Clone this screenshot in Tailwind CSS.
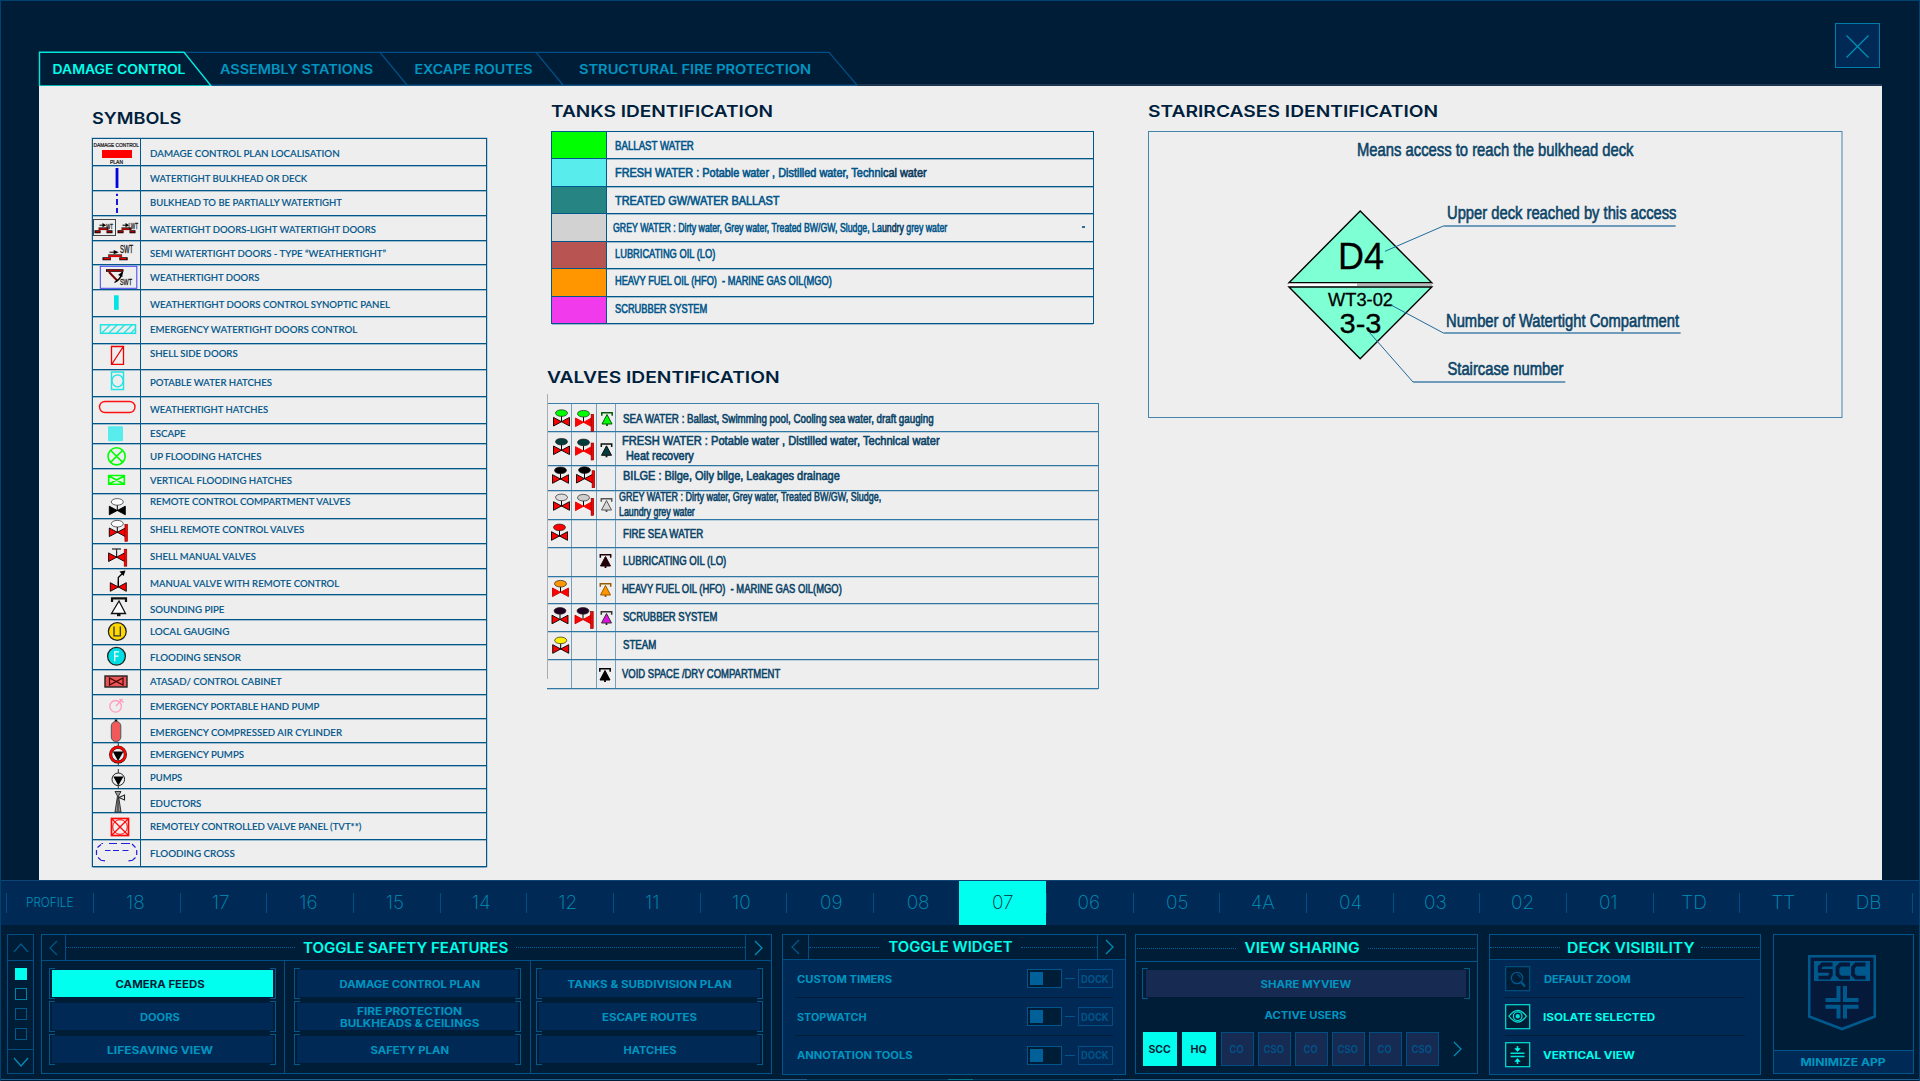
<!DOCTYPE html>
<html lang="en">
<head>
<meta charset="utf-8">
<title>Damage Control</title>
<script src="https://cdn.jsdelivr.net/npm/@tailwindcss/browser@4"></script>
</head>
<body class="bg-[#001d38] overflow-hidden">
<div class="relative w-[1920px] h-[1081px] overflow-hidden bg-[#001d38] border-t border-x border-[#00426f] flex flex-col font-['Inter','Liberation_Sans',sans-serif]">

  <!-- plan viewer -->
  <section class="h-[879px] pl-[38px] flex flex-col shrink-0">
    <div class="flex h-[85px] items-end">
      <svg class="block w-[1844px] h-[35px] overflow-visible" viewBox="39 51.5 1844 35" font-family="Inter, sans-serif" font-weight="600" font-size="12.5" fill="#0095c0">
        <path d="M856 85.5H1882" stroke="#3a4f68" fill="none"/>
        <path d="M184 52.8H829L857 85.7H211M380 52.8L407 85.5M536 52.8L563 85.5" stroke="#004f86" stroke-width="1.3" fill="none"/>
        <path d="M211 86.5H857" stroke="#2d6d9c" fill="none"/>
        <path d="M39.5 86.4V52.8H184L211 86.4Z" stroke="#00e8de" stroke-width="1.4" fill="#001d38"/>
        <text x="52.5" y="74.5" textLength="133" lengthAdjust="spacingAndGlyphs" fill="#00ffea">DAMAGE CONTROL</text>
        <text x="220" y="74.5" textLength="153" lengthAdjust="spacingAndGlyphs">ASSEMBLY STATIONS</text>
        <text x="414.5" y="74.5" textLength="118" lengthAdjust="spacingAndGlyphs">EXCAPE ROUTES</text>
        <text x="579" y="74.5" textLength="232" lengthAdjust="spacingAndGlyphs">STRUCTURAL FIRE PROTECTION</text>
      </svg>
    </div>
    <main class="w-[1843px] h-[794px] bg-[#eeeeee] flex items-start">
      <div class="ml-[53px] pt-[22px] w-[395px]">
        <h2 class="h-[29px] leading-[20px] text-[16.5px] font-semibold text-[#001f3d]"><span data-w="89" class="inline-block whitespace-nowrap origin-left">SYMBOLS</span></h2>
        <div id="symbols" class="border border-[#00588a] border-b-0 mt-px shadow-[0_0_0_0.5px_#00588a66]"></div>
      </div>
      <div class="ml-[60px] w-[552px]">
        <div class="pt-[15px] pl-[4px]">
          <h2 class="h-[30px] leading-[20px] text-[16.5px] font-semibold text-[#001f3d]"><span data-w="222" class="inline-block whitespace-nowrap origin-left">TANKS IDENTIFICATION</span></h2>
          <div id="tanks" class="w-[543px] border border-[#00588a] border-b-0"></div>
        </div>
        <div class="pt-[43px]">
          <h2 class="h-[37px] leading-[20px] text-[16.5px] font-semibold text-[#001f3d]"><span data-w="232" class="inline-block whitespace-nowrap origin-left">VALVES IDENTIFICATION</span></h2>
          <div class="relative">
            <div id="valves" class="w-[552px] border-t border-r border-[#3a7ea9] mt-[-1px]"></div>
            <div class="absolute left-0 top-[-9px] w-px h-[285px] bg-[#a9adb1]"></div>
          </div>
        </div>
      </div>
      <div class="ml-[49px] pt-[15px]">
        <h2 class="h-[30px] leading-[20px] text-[16.5px] font-semibold text-[#001f3d]"><span data-w="290" class="inline-block whitespace-nowrap origin-left">STARIRCASES IDENTIFICATION</span></h2>
        <svg class="block w-[695px] h-[287px]" viewBox="1148 131 695 287" font-family="Liberation Sans, sans-serif" font-size="18.5">
          <rect x="1148.5" y="131.5" width="693.5" height="286" fill="none" stroke="#4585ad"/>
          <path d="M1289 282.7L1360.2 211L1431.8 282.7Z" fill="#7fffd4" stroke="#000" stroke-width="1.4"/>
          <rect x="1289" y="283.5" width="68" height="2.5" fill="#fff"/><rect x="1357" y="283.5" width="75" height="2.5" fill="#b9b9b9"/>
          <path d="M1289 287L1360.2 358.8L1431.8 287Z" fill="#7fffd4" stroke="#000" stroke-width="1.4"/>
          <g fill="#000" stroke="#000" stroke-width=".3">
            <text x="1338" y="268.8" font-size="36.5" textLength="46" lengthAdjust="spacingAndGlyphs">D4</text>
            <text x="1328" y="306" font-size="18" textLength="65" lengthAdjust="spacingAndGlyphs">WT3-02</text>
            <text x="1339.5" y="332.5" font-size="28" textLength="42" lengthAdjust="spacingAndGlyphs">3-3</text>
          </g>
          <path d="M1385 251.3L1443.4 226M1391 305L1443.4 333M1369.3 332.3L1413 382" stroke="#1f6a9c" fill="none"/>
          <path d="M1443.4 226H1675.6M1443.4 333H1680.6M1413 382H1565.3" stroke="#6e9cba" stroke-width="1.8" fill="none"/>
          <g fill="#0a4468" stroke="#0a4468" stroke-width=".6">
            <text x="1357" y="155.8" textLength="276.5" lengthAdjust="spacingAndGlyphs">Means access to reach the bulkhead deck</text>
            <text x="1447" y="219.3" font-size="17.5" textLength="229.5" lengthAdjust="spacingAndGlyphs">Upper deck reached by this access</text>
            <text x="1446" y="326.5" font-size="17.5" textLength="233" lengthAdjust="spacingAndGlyphs">Number of Watertight Compartment</text>
            <text x="1447.4" y="375.3" font-size="17.5" textLength="116" lengthAdjust="spacingAndGlyphs">Staircase number</text>
          </g>
        </svg>
      </div>
    </main>
  </section>
  <button class="absolute left-[1834px] top-[22px] w-[45px] h-[45px] border-[1.5px] border-[#007ba8] bg-[#002a55]">
    <svg class="block w-[42px] h-[42px]" viewBox="0 0 42 42"><path d="M10.5 10.5L32.5 32.5M32.5 10.5L10.5 32.5" stroke="#0090b8" stroke-width="1.2"/></svg>
  </button>

  <!-- deck selector -->
  <nav id="decks" class="h-[45px] shrink-0 pl-[5.4px] bg-[#002a55] border-t border-[#0d4675] flex items-center"></nav>

  <!-- control deck -->
  <footer class="relative h-[155px] shrink-0 pl-[6px] pt-[9px] flex items-start text-[10px] leading-[12px] font-bold text-[#0095c0]">
    <div class="w-[27px] h-[140px] border border-[#004e84] flex flex-col items-center">
      <div class="h-[26px] w-full border-b border-[#004e84] flex items-center justify-center"><svg class="w-[16px] h-[10px]" viewBox="0 0 16 10"><path d="M1 9L8 1L15 9" fill="none" stroke="#00598d" stroke-width="1.2"/></svg></div>
      <div class="h-[88px] pt-[7px] w-full flex flex-col items-center gap-[8px]">
        <i class="w-[12px] h-[12px] bg-[#00ffee]"></i><i class="w-[12px] h-[12px] border-[1.5px] border-[#0083a8]"></i><i class="w-[12px] h-[12px] border-[1.5px] border-[#00598d]"></i><i class="w-[12px] h-[12px] border-[1.5px] border-[#00598d]"></i>
      </div>
      <div class="flex-1 w-full border-t border-[#004e84] flex items-center justify-center"><svg class="w-[16px] h-[10px]" viewBox="0 0 16 10"><path d="M1 1L8 9L15 1" fill="none" stroke="#0090b8" stroke-width="1.2"/></svg></div>
    </div>

    <div class="ml-[6.500px] w-[731px] h-[140px] border border-[#00558a] flex flex-col">
      <div class="h-[26px] border-b-[1.5px] border-[#004e84] flex items-stretch">
        <div class="w-[25px] border-r border-[#004e84] flex items-center justify-center"><svg class="w-[9px] h-[16px]" viewBox="0 0 9 16"><path d="M8 1L1 8L8 15" fill="none" stroke="#00598d" stroke-width="1.2"/></svg></div>
        <div class="flex-1 flex items-center justify-center"><i class="w-[229px] border-t border-dotted border-[#00609a]"></i><div class="w-[221px] text-center text-[14px] leading-[16px] text-[#00ffea] font-semibold"><span data-w="205" class="inline-block whitespace-nowrap origin-center">TOGGLE SAFETY FEATURES</span></div><i class="w-[229px] border-t border-dotted border-[#00609a]"></i></div>
        <div class="w-[26px] border-l border-[#004e84] flex items-center justify-center"><svg class="w-[9px] h-[16px]" viewBox="0 0 9 16"><path d="M1 1L8 8L1 15" fill="none" stroke="#0090b8" stroke-width="1.2"/></svg></div>
      </div>
      <div id="features" class="flex-1 grid grid-cols-[242px_246px_1fr]"></div>
    </div>

    <div class="ml-[10px] w-[344px] h-[141px] border border-[#00558a] bg-[#002a55] flex flex-col">
      <div class="h-[27px] border-b-[1.5px] border-[#004e84] bg-[#001d38] flex items-stretch">
        <div class="w-[27px] border-r border-[#004e84] flex items-center justify-center"><svg class="w-[9px] h-[16px]" viewBox="0 0 9 16"><path d="M8 1L1 8L8 15" fill="none" stroke="#00598d" stroke-width="1.2"/></svg></div>
        <div class="flex-1 flex items-center justify-center"><i class="w-[70px] border-t border-dotted border-[#00609a]"></i><div class="w-[142px] text-center text-[14px] leading-[16px] text-[#00ffea] font-semibold"><span data-w="124" class="inline-block whitespace-nowrap origin-center">TOGGLE WIDGET</span></div><i class="w-[76px] border-t border-dotted border-[#00609a]"></i></div>
        <div class="w-[28px] pr-[3px] border-l border-[#004e84] flex items-center justify-center"><svg class="w-[9px] h-[16px]" viewBox="0 0 9 16"><path d="M1 1L8 8L1 15" fill="none" stroke="#0090b8" stroke-width="1.2"/></svg></div>
      </div>
      <div id="widgets" class="px-[12px]"></div>
    </div>

    <div class="ml-[9px] w-[343px] h-[140px] border border-[#00558a] flex flex-col">
      <div class="h-[27px] border-b-[1.5px] border-[#00558a] flex items-center justify-center"><i class="w-[99px] border-t border-dotted border-[#00609a]"></i><div class="w-[132px] text-center text-[14px] leading-[16px] text-[#00ffea] font-semibold"><span data-w="115" class="inline-block whitespace-nowrap origin-center">VIEW SHARING</span></div><i class="w-[107px] border-t border-dotted border-[#00609a]"></i></div>
      <div class="pl-[6px] pt-[6px]">
        <div class="relative w-[328px] h-[31px] border-x border-[#00598d] px-[3px] py-[2px]">
          <i class="absolute left-0 top-0 w-[5px] h-full border-y border-[#00598d]"></i><i class="absolute right-0 top-0 w-[5px] h-full border-y border-[#00598d]"></i>
          <div class="h-full bg-[#162a52] flex items-center justify-center"><span data-w="91" class="inline-block whitespace-nowrap origin-center">SHARE MYVIEW</span></div>
        </div>
      </div>
      <div class="pt-[10px] pr-px text-center"><span data-w="82" class="inline-block whitespace-nowrap origin-center">ACTIVE USERS</span></div>
      <div class="mt-[11px] pl-[7px] flex items-center">
        <div class="w-[34px] h-[34px] bg-[#00ffee] text-[#001d38] flex items-center justify-center"><span data-w="22" class="inline-block origin-center">SCC</span></div>
        <div class="ml-[5px] w-[34px] h-[34px] bg-[#00ffee] text-[#001d38] flex items-center justify-center"><span data-w="16" class="inline-block origin-center">HQ</span></div>
        <div id="users" class="ml-[5px] flex gap-[4px]"></div>
        <svg class="ml-[14px] w-[9px] h-[16px]" viewBox="0 0 9 16"><path d="M1 1L8 8L1 15" fill="none" stroke="#0090b8" stroke-width="1.2"/></svg>
      </div>
    </div>

    <div class="ml-[11px] w-[272px] h-[141px] border border-[#00558a] bg-[#002a55] flex flex-col">
      <div class="h-[27px] border-b-[1.5px] border-[#004e84] bg-[#001d38] flex items-center justify-center pt-px"><i class="w-[70px] border-t border-dotted border-[#00609a]"></i><div class="w-[141px] text-center text-[14px] leading-[16px] text-[#00ffea] font-semibold"><span data-w="128" class="inline-block whitespace-nowrap origin-center">DECK VISIBILITY</span></div><i class="w-[58px] border-t border-dotted border-[#00609a]"></i></div>
      <div class="px-[15px]">
        <div class="flex items-center h-[38px] border-b border-[#001d38]">
          <svg class="w-[26px] h-[26px]" viewBox="0 0 26 26" fill="none" stroke="#00598d"><rect x=".7" y=".7" width="24" height="24" fill="#001d38"/><circle cx="12" cy="12" r="5.7" stroke-width="1.2"/><path d="M12 8.6a3.5 3.5 0 0 1 3.3 3.3"/><path d="M16.2 16.2L20 20.5" stroke-width="2.2"/></svg>
          <span data-w="87" class="ml-[13px] inline-block whitespace-nowrap origin-left">DEFAULT ZOOM</span>
        </div>
        <div class="flex items-center h-[38px] border-b border-[#001d38] text-[#00ffea]">
          <svg class="w-[26px] h-[26px]" viewBox="0 0 26 26" fill="none" stroke="#00e0d4" stroke-width="1.2"><rect x=".7" y=".7" width="24" height="24" fill="#001d38"/><path d="M4 12.2Q12.7 .5 21.4 12.2Q12.7 23.9 4 12.2Z"/><circle cx="12.7" cy="12.2" r="4.3"/><circle cx="12.7" cy="12.2" r="1.5" fill="#00e0d4" stroke-width="1.4"/></svg>
          <span data-w="112" class="ml-[12px] inline-block whitespace-nowrap origin-left">ISOLATE SELECTED</span>
        </div>
        <div class="flex items-center h-[38px] text-[#00ffea]">
          <svg class="w-[26px] h-[26px]" viewBox="0 0 26 26" stroke="#00e0d4" stroke-width="1.2" fill="none"><rect x=".7" y=".7" width="24" height="24" fill="#001d38"/><path d="M5.5 11.3H19.5M5.5 14.5H19.5" stroke-width="1.6"/><path d="M12.5 4V7M12.5 22V19" stroke-width="1.6"/><path d="M9.3 6.3H15.7L12.5 9.7ZM9.3 19.7H15.7L12.5 16.3Z" fill="#00ffee" stroke="none"/></svg>
          <span data-w="92" class="ml-[12px] inline-block whitespace-nowrap origin-left">VERTICAL VIEW</span>
        </div>
      </div>
    </div>

    <div class="ml-[12px] w-[141px] h-[140px] border border-[#00558a] flex flex-col">
      <div class="flex-1 flex justify-center">
        <svg class="mt-[20px] mr-[3px] w-[68px] h-[77px]" viewBox="0 0 68 77"><path d="M1.2 1.2H66.8V61.5L34 74L1.2 61.5Z" fill="#051a3a" stroke="#00598d" stroke-width="2.6"/><rect x="6" y="6" width="56" height="20" fill="#00598d"/><g fill="none" stroke="#051a3a" stroke-width="3.8"><path d="M24.5 9.5H14.5L11.8 12V15.8H22.8V20L21 22.6H10.5"/><path d="M42 9.5H32.5L29.5 12.5V19.6L32.5 22.6H42"/><path d="M57.5 9.5H48L45 12.5V19.6L48 22.6H57.5"/></g><path d="M30.5 31V45H17.5M37 31V45H50.5M30.5 63.5V51.8H17.5M37 63.5V51.8H50.5" fill="none" stroke="#00598d" stroke-width="4"/></svg>
      </div>
      <div class="h-[23px] border-t border-[#00558a] bg-[#002a55] flex items-center justify-center"><span data-w="85" class="inline-block whitespace-nowrap origin-center">MINIMIZE APP</span></div>
    </div>

    <div class="absolute left-0 bottom-0 w-full h-px flex bg-[#1f5f8f]"><i class="ml-[806px] w-[141px] bg-[#003a5f]"></i><i class="w-[25px] bg-[#007a8c]"></i><i class="w-[140px] bg-[#003a5f]"></i></div>
  </footer>
</div>

<script>
const $ = id => document.getElementById(id);

// Gate valve centred on x,y; optional operator bulb and hull flange.
const valve = (x, y, body, bulb, flange, line = '#000') =>
  `<path d="M${x} ${y}V${y - 6}" stroke="#000"/>` +
  (bulb ? `<ellipse cx="${x}" cy="${y - 8.6}" rx="6" ry="3.3" fill="${bulb}" stroke="#222" stroke-width=".7"/>` : '') +
  `<path d="M${x - 8} ${y - 4.3}V${y + 4.3}L${x + 8} ${y - 4.3}V${y + 4.3}Z" fill="${body}" stroke="${line}" stroke-width=".9"/>` +
  (flange ? `<rect x="${x + 7.6}" y="${y - 8}" width="2.6" height="17" fill="#f00" stroke="#700" stroke-width=".6"/>` : '');
// Sounding pipe bell centred on x with its base at y.
const bell = (x, y, fill, line = '#000') =>
  `<g transform="translate(${x} ${y})"><path d="M-5.2 -8.3V-11.3H5.2V-8.3" fill="none" stroke="${line}" stroke-width="1.5"/><path d="M0 -9.5L5 0H-5Z" fill="${fill}" stroke="${line}" stroke-width="1"/><path d="M0 0V2" stroke="${line}" stroke-width="1.8"/></g>`;
// Sliding door mark.
const door = (x, y, w, label, c) =>
  `<path d="M${x} ${y}h${w * .3}M${x + w * .6} ${y}h${w * .3}" stroke="#000" stroke-width="3"/><path d="M${x + 1} ${y}h${w * .25}M${x + w * .63} ${y}h${w * .23}" stroke="${c}" stroke-width="1.5"/><path d="M${x + w * .2} ${y - 2.6}h${w * .5}" stroke="${c}" stroke-width="2"/><path d="M${x + w * .2} ${y - 4}h${w * .5}" stroke="#000" stroke-width=".7"/><path d="M${x + w * .25} ${y - 6.5}h${w * .2}" stroke="#000"/><path d="M${x + w * .4} ${y - 8.6}l${w * .18} 2.1l${-w * .18} 2.1z"/>` + label;
const tag = (x, y, size, w, t) => `<text x="${x}" y="${y}" font-size="${size}" textLength="${w}" lengthAdjust="spacingAndGlyphs" font-family="Liberation Sans, sans-serif" fill="#111" stroke="#111" stroke-width=".3">${t}</text>`;

// [bottom line, text centre, text width, label, symbol]
const symbols = [
  [165,153.7,190,'DAMAGE CONTROL PLAN LOCALISATION', `<rect x="102" y="150" width="30" height="8" fill="#f00"/><g font-family="Liberation Sans, sans-serif" font-size="5" fill="#111" stroke="#111" stroke-width=".2"><text x="93.5" y="146.8" textLength="45.5" lengthAdjust="spacingAndGlyphs">DAMAGE CONTROL</text><text x="110" y="163.8" textLength="13" lengthAdjust="spacingAndGlyphs">PLAN</text></g>`],
  [190,178.7,157,'WATERTIGHT BULKHEAD OR DECK', `<path d="M117 168V188" stroke="#0000e0" stroke-width="2.8"/>`],
  [215,202.7,192,'BULKHEAD TO BE PARTIALLY WATERTIGHT', `<path d="M117 193.7V196M117 199V205M117 208V213" stroke="#0000e0" stroke-width="1.8"/>`],
  [240,229.7,226,'WATERTIGHT DOORS-LIGHT WATERTIGHT DOORS', `<rect x="93.5" y="219.5" width="22" height="16" fill="none" stroke="#444"/>` + door(94.5,231.7,20,tag(106,228.5,7.5,7,'WT'),'#a00000') + door(117.5,231.7,20,tag(128.5,228.5,8.5,9.5,'LWT'),'#a00000')],
  [264,253.7,236,'SEMI WATERTIGHT DOORS - TYPE “WEATHERTIGHT”', door(102.5,258.7,28,tag(120,252.7,10,13,'SWT'),'#e00000')],
  [289,277.7,109,'WEATHERTIGHT DOORS', `<rect x="100.3" y="266.3" width="36.5" height="22" fill="none" stroke="#4040f0"/><path d="M106 270.5H123.5" stroke="#000" stroke-width="2.6"/><path d="M107 270.5H122.5" stroke="#b00000" stroke-width="1.4"/><path d="M109 272L117.5 281" stroke="#800000" stroke-width="2"/><path d="M122.5 272Q121 279 114.5 282.5" stroke="#000" stroke-width="1.4" fill="none"/><path d="M118 275l4-3l.5 5z"/>` + tag(120,285,9.5,12,'SWT')],
  [316,304.7,240,'WEATHERTIGHT DOORS CONTROL SYNOPTIC PANEL', `<rect x="114" y="295.3" width="4.7" height="14.5" fill="#00e4e4"/>`],
  [343,329.7,207,'EMERGENCY WATERTIGHT DOORS CONTROL', `<rect x="100.5" y="324.8" width="35" height="8.5" fill="none" stroke="#1fe3e3" stroke-width="1.5"/><path d="M102 333L110 325M109 333L117 325M116.5 333L124.5 325M124 333L132 325M131 333L135.5 328.5" stroke="#1fe3e3" stroke-width="1.3"/>`],
  [369,353.7,88,'SHELL SIDE DOORS', `<path d="M111.5 346.5H123.5V364.3H111.5ZM112 364L123 347" fill="none" stroke="#f00000" stroke-width="1.3"/>`],
  [396,382.7,122,'POTABLE WATER HATCHES', `<path d="M111.5 372H123.5V389.5H111.5Z" fill="none" stroke="#1fe3e3" stroke-width="1.4"/><ellipse cx="117.6" cy="380.8" rx="5.6" ry="6" fill="none" stroke="#1fe3e3" stroke-width="1.3"/>`],
  [423,409.7,118,'WEATHERTIGHT HATCHES', `<rect x="99.5" y="401.5" width="35.5" height="11" rx="5.5" fill="none" stroke="#ff1010" stroke-width="1.4"/>`],
  [443,433.7,36,'ESCAPE', `<rect x="108" y="426.3" width="15" height="15" rx="1" fill="#58ecec"/>`],
  [468,456.7,111,'UP FLOODING HATCHES', `<circle cx="116.6" cy="456.3" r="8.6" fill="none" stroke="#0f0" stroke-width="1.6"/><path d="M110.5 450.2L122.7 462.4M122.7 450.2L110.5 462.4" stroke="#0f0" stroke-width="1.6"/>`],
  [493,480.7,142,'VERTICAL FLOODING HATCHES', `<path d="M108.7 475.5H124.3V484.3H108.7ZM109 476L124 484M124 476L109 484" fill="none" stroke="#0f0" stroke-width="1.6"/>`],
  [518,501.7,200,'REMOTE CONTROL COMPARTMENT VALVES', valve(117.3,510.5,'#000','#fff')],
  [543,529.7,154,'SHELL REMOTE CONTROL VALVES', valve(117.3,532.3,'#f00','#fff',1)],
  [568,556.7,106,'SHELL MANUAL VALVES', valve(116.6,557.2,'#f00','',1) + `<path d="M112 549H121" stroke="#222" stroke-width="1.2"/><path d="M116.6 549V556" stroke="#222"/>`],
  [594,583.7,189,'MANUAL VALVE WITH REMOTE CONTROL', valve(118.3,587,'#f00','',0) + `<path d="M118.3 586V577.5L123 573" fill="none" stroke="#000" stroke-width="1.3"/><path d="M119.5 571.5L125.5 570.5L123.5 576Z"/>`],
  [619,610,74,'SOUNDING PIPE', `<path d="M112 602V598.3H126V602" fill="none" stroke="#111" stroke-width="2.2"/><path d="M119 601L125.5 613.5H111.5Z" fill="#fff" stroke="#111" stroke-width="1.3"/><path d="M117 615H120.5" stroke="#111" stroke-width="2.4"/>`],
  [644,631.7,79,'LOCAL GAUGING', `<circle cx="117.3" cy="631.5" r="8.9" fill="#ffd800" stroke="#222" stroke-width="1.3"/><path d="M114 626.5V635.8H119.5M120.3 626.5V636.5" fill="none" stroke="#333" stroke-width="1.3"/>`],
  [669,657.7,91,'FLOODING SENSOR', `<circle cx="116.5" cy="656.3" r="8.9" fill="#00e0e4" stroke="#222" stroke-width="1.3"/><path d="M119 651.8H114.7V661.3M114.7 656.2H118.5" fill="none" stroke="#fff" stroke-width="1.3"/>`],
  [694,681.7,132,'ATASAD/ CONTROL CABINET', `<rect x="105" y="676" width="22" height="11" fill="#ea5555" stroke="#222" stroke-width="1.4"/><path d="M109.5 678V685L123 678V685Z" fill="none" stroke="#400" stroke-width="1.2"/>`],
  [718,706.7,169,'EMERGENCY PORTABLE HAND PUMP', `<circle cx="115.6" cy="706.3" r="5.8" fill="none" stroke="#ff9dc0" stroke-width="1.3"/><path d="M116 706L122.5 699M119.5 699L123.5 702.5" stroke="#ff9dc0" stroke-width="1.4"/>`],
  [742,732.7,192,'EMERGENCY COMPRESSED AIR CYLINDER', `<path d="M116 719.5V723" stroke="#111" stroke-width="2.5"/><rect x="111.3" y="721.5" width="9.5" height="20" rx="4.5" fill="#f05a5a" stroke="#555" stroke-width="1"/>`],
  [765,754.7,94,'EMERGENCY PUMPS', `<path d="M118.3 743V765" stroke="#333"/><circle cx="118" cy="754.6" r="7.4" fill="#eee" stroke="#222" stroke-width="3.2"/><circle cx="118" cy="754.6" r="7.4" fill="none" stroke="#f00" stroke-width="2.2"/><path d="M112.8 751.5H123.5L118 761Z"/>`],
  [788,777.7,32,'PUMPS', `<path d="M118.3 769V789" stroke="#333"/><circle cx="118.3" cy="779.3" r="6.3" fill="#eee" stroke="#222"/><path d="M113.3 776.5H123.5L118.3 785.5Z"/>`],
  [812,803.7,51,'EDUCTORS', `<path d="M115 791.5H121L118.5 796L121 812H115L117.5 796Z" fill="#999" stroke="#222" stroke-width=".9"/><path d="M118 811V798" stroke="#222"/><path d="M119 797.5L124.5 795V800Z" fill="none" stroke="#222" stroke-width="1.1"/>`],
  [839,827,211,'REMOTELY CONTROLLED VALVE PANEL (TVT**)', `<rect x="111.5" y="818.5" width="17" height="17" fill="none" stroke="#ff0808" stroke-width="1.7"/><circle cx="120" cy="827" r="7.3" fill="none" stroke="#ff0808" stroke-width="1"/><path d="M112 819L128 835M128 819L112 835" stroke="#ff0808" stroke-width="1.3"/>`],
  [866,853.7,85,'FLOODING CROSS', `<path d="M101.5 843.5H103M109 843.5H117M121 843.5H130M101 844.5L97.5 847.5M96.5 850V855M98 857.5L101 860.3L105 860.8M132 844L135.5 847.5M136.7 850V855M135.5 857.5L132.5 860.3L128.5 860.8M105 850.5H110.5M113 850.5H119M122.5 850.5H128.5" fill="none" stroke="#2020d8" stroke-width="1.2"/>`],
];
let top0 = 138;
$('symbols').innerHTML = symbols.map(([b, c, w, label, art]) => {
  const h = b - top0, y = top0 + 1; top0 = b;
  return `<div class="flex border-b border-[#00588a] shadow-[0_1px_0_#00588a55]" style="height:${h}px">
    <div class="w-[48px] border-r border-[#00588a]"><svg class="block w-[47px] h-[20px] overflow-visible" viewBox="93 ${y} 47 20">${art}</svg></div>
    <div class="pl-[9px] text-[10.3px] leading-[12px] font-medium text-[#00558a] [-webkit-text-stroke:0.15px_currentColor] font-['Lato','Liberation_Sans',sans-serif]" style="padding-top:${Math.round(c - 7 - y)}px"><span data-w="${w}" class="inline-block whitespace-nowrap origin-left">${label}</span></div></div>`;
}).join('');

const tanks = [
  [158,'#00ff00',615,79,146,'BALLAST WATER'],
  [186,'#58ecec',615,312,173.3,'FRESH WATER : Potable water , Distilled water, Techni<span class="text-[#0b3a5e]">cal water</span>'],
  [213,'#268583',615,164,200.7,'TREATED GW/WATER BALLAST'],
  [241,'#d2d2d2',613.5,334,228,'GREY WATER : Dirty water, Grey water, Treated BW/GW, Sludge, La<span class="text-[#0b3a5e]">undry</span> grey water'],
  [268,'#b85553',615,100,254,'LUBRICATING OIL (LO)'],
  [296,'#ff9600',615,217,281.3,'HEAVY FUEL OIL (HFO)&nbsp; - MARINE GAS OIL(MGO)'],
  [323,'#f03aec',615,92,309,'SCRUBBER SYSTEM'],
];
top0 = 131;
$('tanks').innerHTML = tanks.map(([b, col, x, w, c, label], i) => {
  const h = b - top0, y = top0 + 1; top0 = b;
  return `<div class="flex border-b border-[#00588a] shadow-[0_1px_0_#00588a55]" style="height:${h}px">
    <div class="w-[55px] border-r border-[#00588a]" style="background:${col}"></div>
    <div class="text-[12px] leading-[14px] text-[#00558a] [-webkit-text-stroke:0.6px_currentColor] font-['Liberation_Sans',sans-serif]" style="padding-top:${c - 7 - y}px;padding-left:${x - 607.5}px"><span data-w="${w}" class="inline-block whitespace-nowrap origin-left">${label}</span></div>
    ${i === 3 ? '<i class="ml-auto mr-[8px] mt-[12px] w-[3px] h-[2px] bg-[#2d6d9c]"></i>' : ''}</div>`;
}).join('');

// [bottom line, remote valve, shell valve, sounding pipe, text lines]
const valves = [
  [431, valve(561.5,421.7,'#f00','#0f0'), valve(583.5,422.3,'#f00','#0f0',1,'#e00'), bell(607,424,'#0f0','#0a5a0a'), [[622.5,311,419,'SEA WATER : Ballast, Swimming pool, Cooling sea water, draft gauging']]],
  [465, valve(561.5,450.3,'#f00','#043c3c'), valve(583.5,451,'#f00','#043c3c',1,'#e00'), bell(606.5,455.3,'#043c3c','#111'), [[621.7,318,441,'FRESH WATER : Potable water , Distilled water, Technical water'],[626,68,455.7,'Heat recovery']]],
  [490, valve(560.5,479,'#f00','#000'), valve(584.5,478.7,'#f00','#000',1), '', [[622.5,217,475.7,'BILGE : Bilge, Oily bilge, Leakages drainage']]],
  [519, valve(561.5,506,'#f00','#ddd'), valve(583.5,506.3,'#f00','#ccc',1,'#e00'), bell(606.5,510,'#d8d8d8','#555'), [[618.8,262,497,'GREY WATER : Dirty water, Grey water, Treated BW/GW, Sludge,'],[618.8,76,512,'Laundry grey water']]],
  [547, valve(559.5,536,'#f00','#f00'), '', '', [[622.5,80,533.7,'FIRE SEA WATER']]],
  [576, '', '', bell(605.5,566,'#200008','#200008'), [[622.5,103,561.3,'LUBRICATING OIL (LO)']]],
  [603, valve(560.5,592.3,'#f00','#ff9600',0,'#c00'), '', bell(605.5,595,'#ff9600','#9a5a00'), [[621.7,220,588.7,'HEAVY FUEL OIL (HFO)&nbsp; - MARINE GAS OIL(MGO)']]],
  [631, valve(560,619.5,'#f00','#200020'), valve(583,619.5,'#f00','#200020',1,'#c00'), bell(606.5,623,'#e010e0','#333'), [[622.5,94,616.7,'SCRUBBER SYSTEM']]],
  [659, valve(560.7,649,'#f00','#fff000'), '', '', [[622.5,33,644.7,'STEAM']]],
  [688, '', '', bell(605,680,'#000','#000'), [[621.7,158,674.3,'VOID SPACE /DRY COMPARTMENT']]],
];
top0 = 403;
$('valves').innerHTML = valves.map(([b, a, s, p, lines]) => {
  const h = b - top0, y = top0 + 1; let at = y; top0 = b;
  const text = lines.map(([x, w, c, t]) => { const m = c - 6 - at; at = c + 6; return `<div class="h-[12px]" style="margin-top:${m}px;margin-left:${x - 616}px"><span data-w="${w}" class="inline-block whitespace-nowrap origin-left">${t}</span></div>`; }).join('');
  return `<div class="flex border-b border-[#2f77a5] shadow-[0_1px_0_#2f77a544]" style="height:${h}px">
    <div class="w-[25px] border-r-[1.5px] border-[#6fa0be]"><svg class="block w-[24px] h-[20px] overflow-visible" viewBox="547 ${y} 24 20">${a}</svg></div>
    <div class="w-[25px] border-r-[1.5px] border-[#6fa0be]"><svg class="block w-[24px] h-[20px] overflow-visible" viewBox="572 ${y} 24 20">${s}</svg></div>
    <div class="w-[19px] border-r border-[#6fa0be]"><svg class="block w-[18px] h-[20px] overflow-visible" viewBox="597 ${y} 18 20">${p}</svg></div>
    <div class="text-[12px] leading-[12px] text-[#0a4468] [-webkit-text-stroke:0.6px_currentColor] font-['Liberation_Sans',sans-serif]">${text}</div></div>`;
}).join('');

// Optical nudge of each deck label from its cell centre.
const nudge = [-.5,-1.5,-2.9,-1.7,-2,-2.3,-2.3,-4.5,-2,1.3,1.5,0,-1,.8,-.5,.8,-1,-.5,-1.5,-2.3,.3,-1];
$('decks').innerHTML = 'PROFILE 18 17 16 15 14 12 11 10 09 08 07 06 05 4A 04 03 02 01 TD TT DB'.split(' ').map((d, i) =>
  d === '07'
    ? `<a class="w-[86.65px] h-full flex items-center justify-center bg-[#00ffee] text-[19px] leading-[20px] font-extralight text-[#001d38]">07</a>`
    : `<a class="w-[86.65px] h-[20px] border-l border-[#004e84] flex items-center justify-center leading-[20px] text-[#0090b8] ${i ? 'text-[19px] font-extralight' : 'text-[12.5px] font-light'}"><span style="translate:${nudge[i]}px">${i ? d : '<span data-w="47" class="inline-block origin-center">PROFILE</span>'}</span></a>`
).join('') + '<i class="h-[20px] border-l border-[#004e84]"></i>';

const features = [
  [['CAMERA FEEDS',89],['DOORS',40],['LIFESAVING VIEW',106]],
  [['DAMAGE CONTROL PLAN',141],['FIRE PROTECTION',105,'BULKHEADS &amp; CEILINGS',139],['SAFETY PLAN',78]],
  [['TANKS &amp; SUBDIVISION PLAN',164],['ESCAPE ROUTES',95],['HATCHES',53]],
];
$('features').innerHTML = features.map((col, i) => `<div class="pt-[7px] flex flex-col gap-[2px] ${i ? 'border-l border-[#004e84] ' : ''}${['pl-[7px]','pl-[9px]','pl-[5px]'][i]}">` +
  col.map(([t, w, t2, w2], j) => `<div class="relative w-[227px] h-[31px] border-x border-[#00598d] px-[2px] py-[2px]">
    <i class="absolute left-0 top-0 w-[5px] h-full border-y border-[#00598d]"></i><i class="absolute right-0 top-0 w-[5px] h-full border-y border-[#00598d]"></i>
    <div class="h-full flex flex-col items-center justify-center ${['pr-[4px]','pl-[6px]','pl-[1px]'][i]} ${i + j ? 'bg-[#002a55]' : 'bg-[#00ffee] text-[#001d38]'}"><span data-w="${w}" class="inline-block whitespace-nowrap origin-center">${t}</span>${t2 ? `<span data-w="${w2}" class="inline-block whitespace-nowrap origin-center">${t2}</span>` : ''}</div></div>`).join('') + '</div>').join('');

$('widgets').innerHTML = [['CUSTOM TIMERS',95],['STOPWATCH',70],['ANNOTATION TOOLS',116]].map(([t, w], i) =>
  `<div class="flex items-center h-[38px] ${i < 2 ? 'border-b border-[#001d38]' : ''}">
    <span data-w="${w}" class="ml-[2px] inline-block whitespace-nowrap origin-left">${t}</span>
    <div class="ml-auto w-[35px] h-[19px] border-[1.5px] border-[#00558a] bg-[#001d38] p-[2px]"><div class="w-[13px] h-full bg-[#00609a]"></div></div>
    <i class="mx-[3px] w-[10px] border-t border-[#00558a]"></i>
    <div class="w-[35px] h-[19px] border-[1.5px] border-[#004e84] text-[#00558a] flex items-center justify-center"><span data-w="28" class="inline-block origin-center">DOCK</span></div></div>`).join('');

$('users').innerHTML = ['CO','CSO','CO','CSO','CO','CSO'].map(u =>
  `<div class="w-[33px] h-[34px] border-[1.5px] border-[#004e84] bg-[#162a52] text-[#00558a] font-semibold flex items-center justify-center"><span data-w="${u.length > 2 ? 21 : 14}" class="inline-block origin-center">${u}</span></div>`).join('');

const fit = s => { if (s.offsetWidth) s.style.transform = `scaleX(${s.dataset.w / s.offsetWidth})`; };
const labels = document.querySelectorAll('[data-w]');
const watcher = new ResizeObserver(list => list.forEach(e => fit(e.target)));
labels.forEach(s => watcher.observe(s));
addEventListener('load', () => labels.forEach(fit));
</script>
</body>
</html>
